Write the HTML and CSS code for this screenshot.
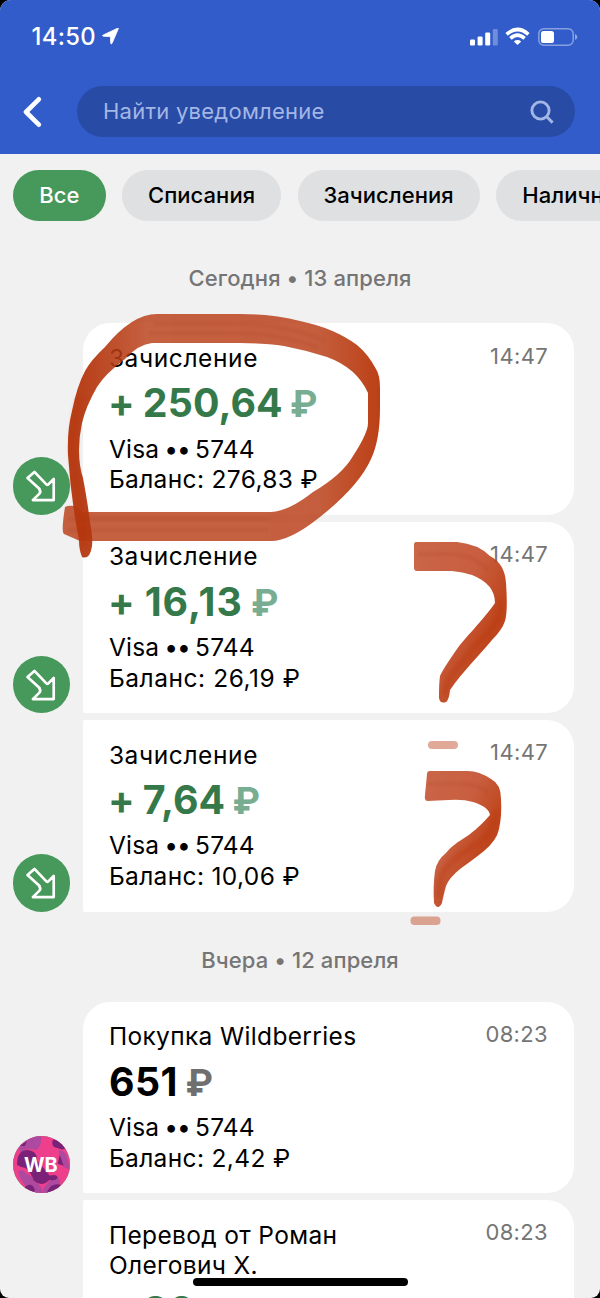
FILE: index.html
```html
<!DOCTYPE html>
<html lang="ru">
<head>
<meta charset="utf-8">
<title>Уведомления</title>
<link rel="stylesheet" href="styles.css">
</head>
<body>
<svg width="0" height="0" class="defs">
  <symbol id="arrow" viewBox="0 0 58 58">
    <path d="M26.8 31.5 L14.6 20.4 L21.6 14.2 L33.6 26.8 Q34.6 27.8 35.6 26.8 L41 21.2 V42.6 H20 L26.4 36.3 Q28.6 34 26.2 31.2" transform="translate(0 .8)" fill="none" stroke="#fff" stroke-width="2.7" stroke-linejoin="round" stroke-linecap="round"/>
  </symbol>
</svg>
<div class="screen">
  <header class="header">
    <div class="status">
      <div class="clock">14:50</div>
      <svg class="loc" width="18" height="17" viewBox="0 0 18 17"><path d="M16.4.6 L10 15.4 Q9.2 16.8 8.7 15 L8.4 9.4 Q8.3 8.7 7.5 8.6 L1.4 8.3 Q-.2 7.8 1.2 7 L15.6.2 Q16.8-.2 16.4.6Z" fill="#fff" stroke="#fff" stroke-width=".8" stroke-linejoin="round"/></svg>
      <svg class="signal" width="28" height="18" viewBox="0 0 28 18" fill="#fff"><rect y="11.500" width="5" height="6" rx="1.3"/><rect x="7.6" y="8.500" width="5" height="9" rx="1.3"/><rect x="15.2" y="4.500" width="5" height="13" rx="1.3"/><rect x="22.8" y="1" width="5" height="16.500" rx="1.3" opacity=".3"/></svg>
      <svg class="wifi" width="25" height="19" viewBox="0 0 25 19" fill="none" stroke="#fff" stroke-width="3.6"><path d="M1.6 7.4 Q12.5-2.4 23.4 7.4"/><path d="M5.4 11.4 Q12.5 5 19.6 11.4"/><path d="M12.5 18 L8.8 14.4 Q12.5 11.6 16.2 14.4Z" fill="#fff" stroke="none"/></svg>
      <svg class="battery" width="40" height="18" viewBox="0 0 40 18"><rect x=".8" y=".8" width="34.4" height="16.4" rx="5" fill="none" stroke="#fff" stroke-opacity=".42" stroke-width="1.5"/><rect x="3" y="3" width="13" height="12" rx="2.6" fill="#fff"/><path d="M37 6 q2.4 1.2 2.4 3 t-2.4 3z" fill="#fff" opacity=".45"/></svg>
    </div>
    <div class="searchbar">
      <svg class="back" width="20" height="32" viewBox="0 0 20 32"><path d="M16.800 3.300 L4 16 L16.800 28.700" fill="none" stroke="#fff" stroke-width="4.6" stroke-linecap="round" stroke-linejoin="round"/></svg>
      <div class="field">
        <span class="placeholder">Найти уведомление</span>
        <svg width="24" height="24" viewBox="0 0 24 24" fill="none" stroke="#a3b7e6" stroke-width="2.9"><circle cx="10.500" cy="10.500" r="8.600"/><path d="M16.500 16.500 L22.600 22.600"/></svg>
      </div>
    </div>
  </header>

  <nav class="chips">
    <div class="chip active">Все</div>
    <div class="chip debit">Списания</div>
    <div class="chip credit">Зачисления</div>
    <div class="chip cash">Наличные</div>
  </nav>

  <main>
    <h2 class="date today">Сегодня • 13 апреля</h2>
    <section class="group">
      <article class="row">
        <svg class="avatar"><use href="#arrow"/></svg>
        <div class="card first">
          <div class="info"><div class="title">Зачисление</div><div class="amount plus">+ 250,64 <span>₽</span></div><div class="line">Visa <b>••</b> 5744</div><div class="line balance">Баланс: 276,83 ₽</div></div>
          <time>14:47</time>
        </div>
      </article>
      <article class="row">
        <svg class="avatar"><use href="#arrow"/></svg>
        <div class="card">
          <div class="info"><div class="title">Зачисление</div><div class="amount plus spaced">+ 16,13 <span>₽</span></div><div class="line">Visa <b>••</b> 5744</div><div class="line balance wide">Баланс: 26,19 ₽</div></div>
          <time>14:47</time>
        </div>
      </article>
      <article class="row">
        <svg class="avatar"><use href="#arrow"/></svg>
        <div class="card">
          <div class="info"><div class="title">Зачисление</div><div class="amount plus">+ 7,64 <span>₽</span></div><div class="line">Visa <b>••</b> 5744</div><div class="line balance">Баланс: 10,06 ₽</div></div>
          <time>14:47</time>
        </div>
      </article>
    </section>

    <h2 class="date yesterday">Вчера • 12 апреля</h2>
    <section class="group">
      <article class="row">
        <svg class="avatar" viewBox="0 0 58 58">
          <rect width="58" height="58" fill="#ee3f8c"/>
          <path d="M6 12 Q14 0 28 0 Q30 8 24 14 Q14 11 8 17Z M5 36 Q10 32 13 38 Q20 40 22 46 Q30 50 30 58 H24 Q8 50 5 36Z M44 41 Q49 44 47 50 L40 58 H30 Q30 48 44 41Z M46 14 Q54 15 55 24 L57 34 L51 31 L47 21Z" fill="#ad499f"/>
          <path d="M4 29 Q4 14 15 14 Q25 15 24 25 Q32 33 37 40 Q44 38 45 42 Q42 46 37 44 Q29 52 21 45 Q18 36 12 32 Q8 32 4 29Z M40 4 Q38 12 45 12 Q50 15 53 12 L46 2Z M45 28 L47 19 L51 30Z M12 51 Q19 46 22 54 L21 58 H12Z M35 55 Q39 47 48 49 L42 58 H34Z M7 10 L14 5 L12 10Z" fill="#792277"/>
          <text x="28" y="36.500" class="wb">WB</text>
        </svg>
        <div class="card first">
          <div class="info"><div class="title long">Покупка Wildberries</div><div class="amount sum">651 <span>₽</span></div><div class="line">Visa <b>••</b> 5744</div><div class="line balance">Баланс: 2,42 ₽</div></div>
          <time>08:23</time>
        </div>
      </article>
      <article class="row">
        <div class="avatar blank"></div>
        <div class="card">
          <div class="info"><div class="title long">Перевод от Роман<br>Олегович Х.</div><div class="amount plus">+ 30 <span>₽</span></div></div>
          <time>08:23</time>
        </div>
      </article>
    </section>
  </main>

  <svg class="ink" width="600" height="1298" viewBox="0 0 600 1298">
    <defs>
      <linearGradient id="loop" gradientUnits="userSpaceOnUse" x1="68" y1="0" x2="380" y2="0">
        <stop offset="0" stop-color="#b53810" stop-opacity=".97"/><stop offset=".07" stop-color="#b53810" stop-opacity=".94"/><stop offset=".25" stop-color="#b83d16" stop-opacity=".82"/><stop offset=".8" stop-color="#b83d16" stop-opacity=".83"/><stop offset=".95" stop-color="#b93a0f" stop-opacity=".93"/><stop offset="1" stop-color="#b93a0f" stop-opacity=".97"/>
      </linearGradient>
      <linearGradient id="hook" gradientUnits="userSpaceOnUse" x1="414" y1="560" x2="505" y2="600">
        <stop offset="0" stop-color="#bf4420" stop-opacity=".82"/><stop offset=".6" stop-color="#bf4420" stop-opacity=".86"/><stop offset="1" stop-color="#bb3a0e" stop-opacity=".94"/>
      </linearGradient>
      <linearGradient id="hook2" gradientUnits="userSpaceOnUse" x1="424" y1="780" x2="500" y2="815">
        <stop offset="0" stop-color="#bf4420" stop-opacity=".82"/><stop offset=".6" stop-color="#bf4420" stop-opacity=".86"/><stop offset="1" stop-color="#bb3a0e" stop-opacity=".94"/>
      </linearGradient>
    </defs>
    <g class="strokes">
      <path fill="#b83d16" fill-opacity=".82" d="M65 507 Q68 505 76 506 L82 512 H271 V541 H80 L64 534 Q61 532 65 507Z"/>
      <path fill="url(#loop)" d="M82 557 Q79 550 79 540 Q71 500 68 455 Q67 430 72 411 Q77 386 85 371 Q91 360 105 347 Q132 314 157 314 H240 Q275 314 300 321 Q334 328 357 345 Q368 354 376 369 Q380 375 380 388 V408 Q380 440 371 459 Q359 486 320 517 Q290 541 271 541 L271 512 Q289 511 313 492 Q342 475 353 456 Q368 433 368 423 V393 Q357 368 327 357 Q305 350 284 346 Q267 343 240 343 H152 Q139 344 125 359 Q105 374 97 387 Q86 406 82 423 Q79 437 79 450 Q79 466 83 478 Q88 505 90 522 Q93 538 92 546 Q90 560 82 557Z"/>
      <path fill="url(#hook)" d="M416 542 H457 Q478 544 490 556 Q505 564 506 583 Q508 611 505 621 Q502 630 492 640 C477 658 464 670 450 690 Q449 700 446 702 Q440 704 439 698 Q439 682 440 676 Q443 669 457 649 C464 639 483 620 495 603 Q495 584 472 575 Q463 572 452 571 H417 Q414 571 414 568 V545 Q414 542 416 542Z"/>
      <path fill="url(#hook2)" d="M430 771 H468 Q479 771 491 779 Q501 784 501 799 Q502 816 499 829 Q497 840 484 851 Q474 859 460 869 Q449 878 446 886 Q443 897 442 903 Q438 911 434 903 Q433 885 435 871 Q437 860 446 853 C461 836 466 842 490 815 Q489 807 473 802 Q463 799 449 800 L427 801 Q424 800 425 795 L427 774 Q427 771 430 771Z"/>
      <rect x="428" y="741" width="30" height="8" rx="4" fill="#c4532f" fill-opacity=".5"/>
      <rect x="410.500" y="916.500" width="30" height="8.500" rx="4" fill="#c4532f" fill-opacity=".5"/>
    </g>
    <g class="depth">
      <path d="M85 547 Q80 510 74 465 Q71 430 80 398"/>
      <path d="M500 600 V612 Q498 624 480 640 L450 676 L444 694"/>
      <path d="M495 810 Q496 828 480 842 Q446 860 440 880 L438 898"/>
    </g>
    <g class="grain">
      <path d="M154 324 H240 Q290 325 325 341"/><path d="M150 333 H240 Q280 334 318 347"/><path d="M68 519 H270 M68 530 H268"/><path d="M418 554 H455 Q475 556 488 570"/><path d="M428 784 H463 Q478 784 488 793"/>
    </g>
  </svg>
  <div class="home"></div>
</div>
</body>
</html>
```
FILE: styles.css
```css
* { box-sizing: border-box; }
body { margin: 0; background: #000; font-family: Inter, "Noto Sans", sans-serif; }
.defs { position: absolute; }
.screen { position: relative; width: 600px; height: 1298px; overflow: hidden; background: #f1f1f1; border-radius: 11px 11px 9px 9px; }

.header { height: 153.600px; background: #315cc9; }
.status { display: flex; align-items: center; height: 73.600px; padding: 0 22.500px 0 31.500px; color: #fff; }
.clock { width: 70.500px; font-size: 23.800px; font-weight: 500; letter-spacing: .35px; white-space: nowrap; }
.loc { margin-right: auto; }
.signal { margin-right: 7px; }
.wifi { margin-right: 8px; }
.searchbar { display: flex; align-items: center; height: 76px; padding: 0 25.500px 0 22px; }
.back { margin-right: 35px; }
.field { display: flex; flex: 1; align-items: center; justify-content: space-between; height: 51px; padding: 0 21px 0 26px; border-radius: 26px; background: #284ba5; }
.placeholder { color: #a3b7e6; font-size: 22px; line-height: 26px; margin-top: -1px; letter-spacing: .25px; }

.chips { display: flex; gap: 16.300px; height: 67px; padding: 16px 0 0 13px; }
.chip { flex: none; display: flex; align-items: center; justify-content: center; height: 51px; border-radius: 26px; background: #dfe0e2; color: #000; font-size: 22px; font-weight: 500; letter-spacing: .05px; }
.active { width: 92.500px; background: #47985b; color: #fff; }
.debit { width: 159.500px; }
.credit { width: 182px; }
.cash { width: 164px; }

.date { margin: 0; color: #757575; font-size: 22px; font-weight: 500; letter-spacing: .1px; text-align: center; }
.today { height: 102.600px; padding-top: 41.800px; line-height: 32px; }
.yesterday { height: 89.700px; padding-top: 32px; line-height: 32px; }
.group { display: flex; flex-direction: column; gap: 6.500px; }
.row { display: flex; align-items: flex-end; gap: 12.800px; padding: 0 26px 0 12.500px; }
.avatar { flex: none; width: 57.600px; height: 57.600px; border-radius: 50%; background: #47985b; }
.blank { background: none; }
.card { display: flex; flex: 1; justify-content: space-between; height: 191.900px; padding: 19.600px 26px 0; border-radius: 2px 27px 27px 2px; background: #fff; }
.first { border-top-left-radius: 27px; }
.info { color: #000; font-size: 24.500px; line-height: 30.600px; white-space: nowrap; }
.title { letter-spacing: .6px; }
.long { letter-spacing: .35px; }
.amount { height: 60.300px; margin-left: -1px; line-height: 60px; font-size: 39.300px; font-weight: 700; letter-spacing: .1px; word-spacing: -1.200px; }
.amount span { margin-left: -1px; color: #6f6f6f; font-size: 37px; letter-spacing: -1px; }
.spaced { letter-spacing: 1px; }
.sum { margin-left: 0; letter-spacing: .5px; }
.plus { color: #35794a; }
.amount.plus span { color: #78ad92; }
.line { letter-spacing: .2px; }
.line b { margin: 0 -1.500px 0 -2px; font-weight: 400; letter-spacing: -1.200px; }
.line.balance { letter-spacing: .35px; }
.line.wide { letter-spacing: .55px; }
time { color: #757575; font-size: 22px; line-height: 25px; margin-top: .8px; letter-spacing: .35px; }
.wb { fill: #fff; font: 700 20px Inter, sans-serif; text-anchor: middle; }

.ink { position: absolute; inset: 0; pointer-events: none; }
.strokes { filter: blur(.5px); }
.grain { fill: none; stroke: #a83a1a; stroke-opacity: .12; stroke-width: 4; filter: blur(1px); }
.depth { fill: none; stroke: #b83508; stroke-opacity: .35; stroke-width: 6; filter: blur(2px); }
.home { position: absolute; left: 193px; top: 1278px; width: 214.500px; height: 8px; border-radius: 4px; background: #000; }
```
